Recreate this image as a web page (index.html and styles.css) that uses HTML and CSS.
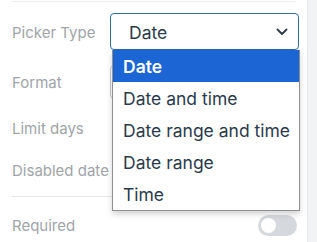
FILE: index.html
```html
<!DOCTYPE html>
<html>
<head>
<meta charset="utf-8">
<link rel="stylesheet" href="styles.css">
</head>
<body>
<div class="panel">
  <div class="form">
    <div class="topline"></div>
    <div class="row r-picker">
      <div class="label">Picker Type</div>
      <div class="control">
        <div class="select">
          <span class="sel-text">Date</span>
          <svg class="chev" width="12" height="8" viewBox="0 0 12 8"><path d="M1.5 1.5 L6 6 L10.5 1.5" fill="none" stroke="#2f3b4a" stroke-width="1.8" stroke-linecap="round" stroke-linejoin="round"/></svg>
        </div>
        <ul class="menu">
          <li class="opt active">Date</li>
          <li class="opt">Date and time</li>
          <li class="opt">Date range and time</li>
          <li class="opt">Date range</li>
          <li class="opt">Time</li>
        </ul>
      </div>
    </div>
    <div class="row r-format">
      <div class="label">Format</div>
      <div class="control"><div class="input"></div></div>
    </div>
    <div class="row r-limit">
      <div class="label">Limit days</div>
    </div>
    <div class="row r-disabled">
      <div class="label">Disabled date</div>
    </div>
    <div class="divider"></div>
    <div class="row r-required">
      <div class="label">Required</div>
      <div class="toggle"><span class="knob"></span></div>
    </div>
  </div>
  <div class="scroll"></div>
</div>
</body>
</html>
```
FILE: styles.css
```css
html, body { margin: 0; padding: 0; background: #fff; }
body { font-family: Inter, "Open Sans", sans-serif; width: 317px; height: 242px; overflow: hidden; }
.panel { display: flex; height: 242px; }
.form { width: 297px; padding-left: 12px; box-sizing: content-box; }
.scroll { width: 9px; background: #f2f3f4; border-left: 1px solid #e8e9ea; height: 242px; margin-left: auto; }
.topline { height: 1px; background: #eceef0; margin-top: 1px; width: 284px; }
.row { display: flex; align-items: center; position: relative; height: 40px; }
.label { width: 98px; color: #a0a4a9; font-size: 15px; line-height: 20px; padding-top: 2px; white-space: nowrap; overflow: hidden; }
.r-picker { margin-top: 10px; align-items: flex-start; }
.r-picker .label { padding-top: 11px; }
.control { position: relative; width: 189px; align-self: flex-start; }
.select { margin-top: 1px; height: 37px; box-sizing: border-box; border: 1.5px solid #2c6ea8; border-radius: 4px; display: flex; align-items: center; justify-content: space-between; padding: 1px 10px 0 18px; background: #fff; }
.sel-text { font-size: 17.5px; color: #2a3a4c; }
.chev { margin-top: 0; }
.menu { position: absolute; top: 38px; left: 2px; width: 186px; margin: 0; padding: 0; list-style: none; background: #fff; border: 1px solid #8d8f92; border-top: none; box-shadow: 0 3px 6px rgba(0,0,0,0.18); z-index: 5; }
.opt { height: 32px; box-sizing: border-box; padding: 2px 0 0 10px; line-height: 30px; font-size: 17.5px; color: #2a3a4c; white-space: nowrap; }
.opt.active { background: #1b66d4; color: #fff; font-weight: 600; }
.r-format { margin-top: 10px; }
.input { margin-top: 3px; height: 34px; box-sizing: border-box; border: 1px solid #c9ccd0; border-radius: 4px; }
.r-limit { margin-top: 6px; }
.r-disabled { margin-top: 2px; }
.r-disabled .label { width: 110px; }
.divider { height: 1px; background: #e6e8ea; width: 284px; margin-top: 6px; }
.r-required { margin-top: 8px; justify-content: space-between; width: 285px; }
.toggle { width: 39px; height: 21px; border-radius: 11px; background: #d5d8dc; position: relative; }
.knob { position: absolute; left: 3px; top: 3px; width: 15px; height: 15px; border-radius: 50%; background: #fff; }
```
